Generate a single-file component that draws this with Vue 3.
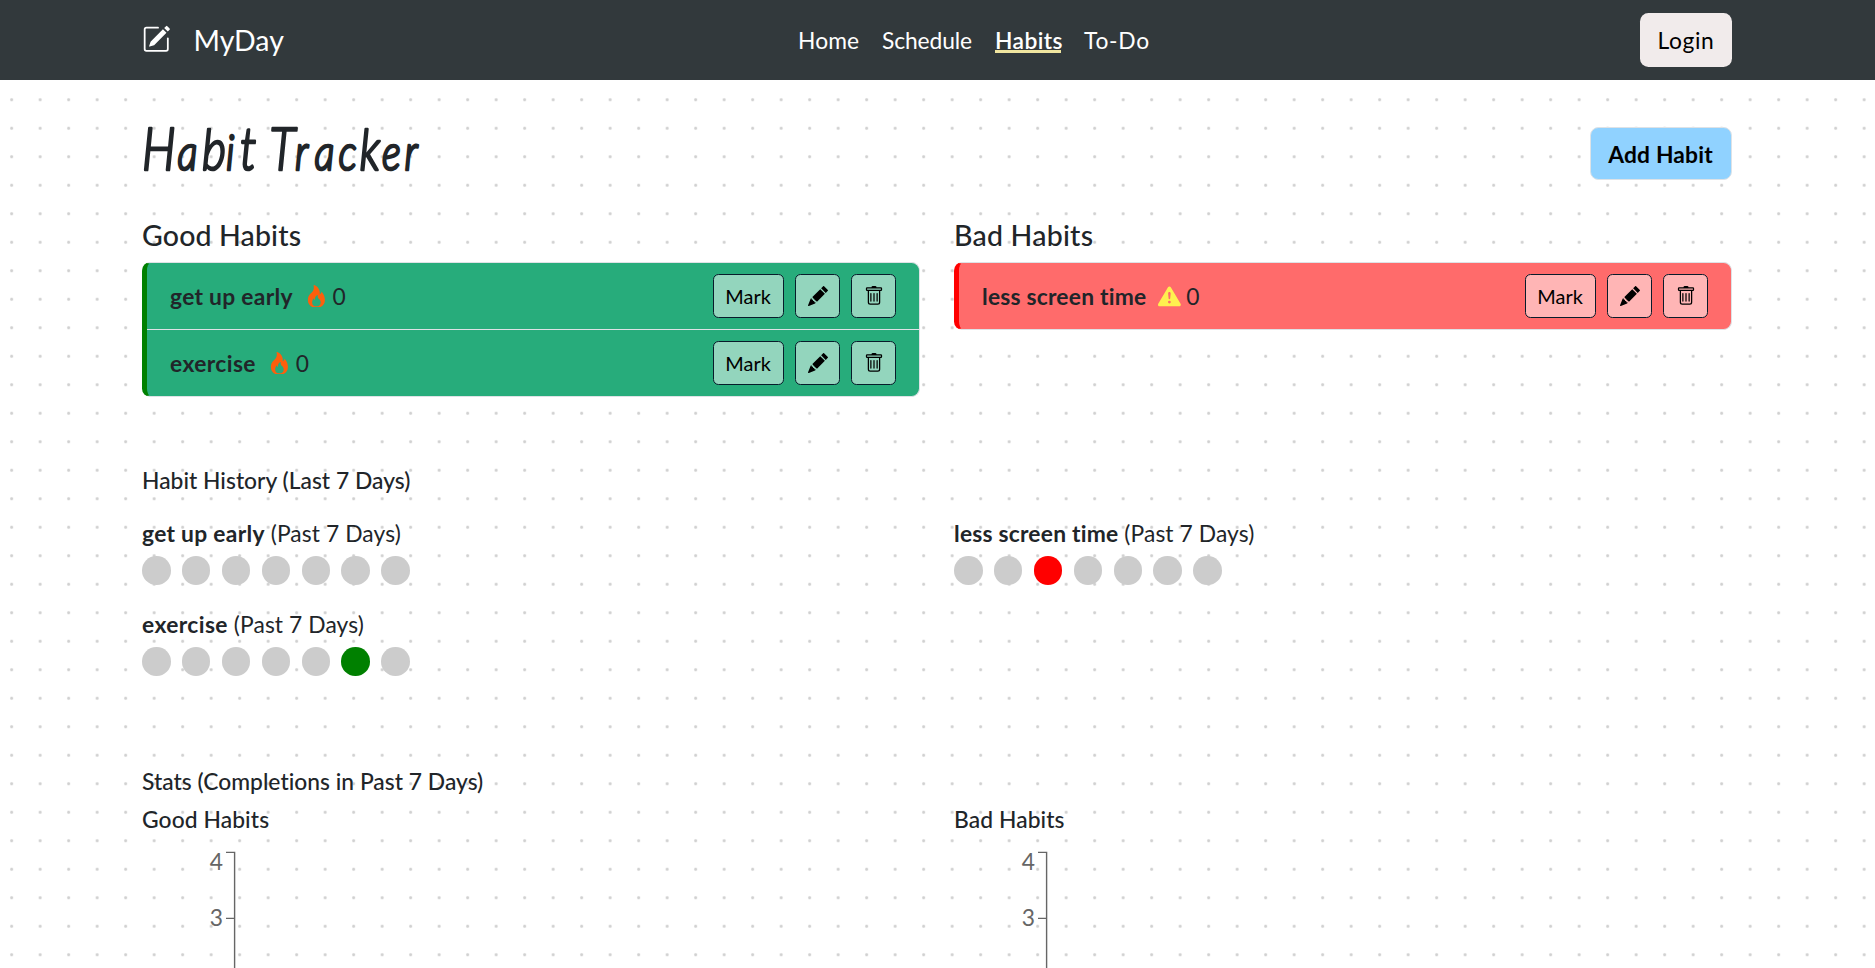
<script setup>
const links = [
  { label: 'Home', tracking: 0.09 },
  { label: 'Schedule', tracking: -0.1 },
  { label: 'Habits', tracking: 0.4, active: true },
  { label: 'To-Do', tracking: 0.75 },
]

// Hand-lettered title: each run has its own start and letter size.
const titleRuns = [
  { text: 'H', x: 0, size: 60 },
  { text: 'a', x: 35.5, size: 50 },
  { text: 'b', x: 60, size: 58 },
  { text: 'i', x: 84, size: 50 },
  { text: 't', x: 98, size: 60 },
  { text: ' ', x: 114, size: 50 },
  { text: 'T', x: 127.5, size: 60 },
  { text: 'r', x: 153, size: 50 },
  { text: 'a', x: 172.5, size: 50 },
  { text: 'c', x: 196.5, size: 50 },
  { text: 'k', x: 217.5, size: 58 },
  { text: 'e', x: 240, size: 50 },
  { text: 'r', x: 262.5, size: 50 },
]
const squeeze = 0.8

const habits = {
  good: [
    { name: 'get up early', streak: 0, tracking: 0.3, history: [0, 0, 0, 0, 0, 0, 0] },
    { name: 'exercise', streak: 0, tracking: 0.4, history: [0, 0, 0, 0, 0, 1, 0] },
  ],
  bad: [
    { name: 'less screen time', streak: 0, tracking: 0.22, history: [0, 0, 1, 0, 0, 0, 0] },
  ],
}
const groups = [
  { kind: 'good', title: 'Good Habits', tracking: 0.15 },
  { kind: 'bad', title: 'Bad Habits', tracking: 0.22 },
]
</script>

<template>
  <div class="page">
    <header class="navbar">
      <div class="brand">
        <svg class="brand-icon" viewBox="0 0 16 16" fill="currentColor">
          <path d="M15.502 1.94a.5.5 0 0 1 0 .706L14.459 3.69l-2-2L13.502.646a.5.5 0 0 1 .707 0l1.293 1.293zm-1.75 2.456-2-2L4.939 9.21a.5.5 0 0 0-.121.196l-.805 2.414a.25.25 0 0 0 .316.316l2.414-.805a.5.5 0 0 0 .196-.12l6.813-6.814z" />
          <path fill-rule="evenodd" d="M1 13.5A1.5 1.5 0 0 0 2.5 15h11a1.5 1.5 0 0 0 1.5-1.5v-6a.5.5 0 0 0-1 0v6a.5.5 0 0 1-.5.5h-11a.5.5 0 0 1-.5-.5v-11a.5.5 0 0 1 .5-.5H9a.5.5 0 0 0 0-1H2.5A1.5 1.5 0 0 0 1 2.5z" />
        </svg>
        <span class="brand-name">MyDay</span>
      </div>
      <nav class="links">
        <div v-for="l in links" :key="l.label">
          <a class="link" :class="{ active: l.active }" :style="{ letterSpacing: l.tracking + 'px' }">{{ l.label }}</a>
        </div>
      </nav>
      <button class="login">Login</button>
    </header>

    <main class="content">
      <div class="title-row">
        <h1>
          <svg class="title" width="300" height="70" viewBox="0 0 300 70">
            <text :transform="`scale(${squeeze} 1)`" y="54"><tspan v-for="(r, n) in titleRuns" :key="n" :x="r.x / squeeze" :font-size="r.size">{{ r.text }}</tspan></text>
          </svg>
        </h1>
        <button class="add">Add Habit</button>
      </div>

      <div class="columns lists">
        <section v-for="g in groups" :key="g.kind">
          <h2 class="group-title" :style="{ letterSpacing: g.tracking + 'px' }">{{ g.title }}</h2>
          <ul class="list" :class="g.kind">
            <li v-for="h in habits[g.kind]" :key="h.name" class="item">
              <strong class="name" :style="{ letterSpacing: h.tracking + 'px' }">{{ h.name }}</strong>
              <svg v-if="g.kind === 'good'" class="status fire" viewBox="0 0 16 16" fill="currentColor">
                <path d="M8 16c3.314 0 6-2 6-5.5 0-1.5-.5-4-2.5-6 .25 1.5-1.25 2-1.25 2C11 4 9 .5 6 0c.357 2 .5 4-2 6-1.25 1-2 2.729-2 4.5C2 14 4.686 16 8 16m0-1c-1.657 0-3-1-3-2.75 0-.75.25-2 1.25-3C6.125 10 7 10.5 7 10.5c-.375-1.25.5-3.25 2-3.5-.179 1-.25 2 1 3 .625.5 1 1.364 1 2.25C11 14 9.657 15 8 15" />
              </svg>
              <svg v-else class="status warn" viewBox="0 0 16 16" fill="currentColor">
                <path d="M8.982 1.566a1.13 1.13 0 0 0-1.96 0L.165 13.233c-.457.778.091 1.767.98 1.767h13.713c.889 0 1.438-.99.98-1.767zM8 5c.535 0 .954.462.9.995l-.35 3.507a.552.552 0 0 1-1.1 0L7.1 5.995A.905.905 0 0 1 8 5m.002 6a1 1 0 1 1 0 2 1 1 0 0 1 0-2" />
              </svg>
              <span class="streak">{{ h.streak }}</span>
              <div class="actions">
                <button class="btn mark">Mark</button>
                <button class="btn icon">
                  <svg viewBox="0 0 16 16" fill="currentColor">
                    <path d="M12.854.146a.5.5 0 0 0-.707 0L10.5 1.793 14.207 5.5l1.647-1.646a.5.5 0 0 0 0-.708zm.646 6.061L9.793 2.5 3.293 9H3.5a.5.5 0 0 1 .5.5v.5h.5a.5.5 0 0 1 .5.5v.5h.5a.5.5 0 0 1 .5.5v.5h.5a.5.5 0 0 1 .5.5v.207zm-7.468 7.468A.5.5 0 0 1 6 13.5V13h-.5a.5.5 0 0 1-.5-.5V12h-.5a.5.5 0 0 1-.5-.5V11h-.5a.5.5 0 0 1-.5-.5V10h-.5a.5.5 0 0 1-.175-.032l-.179.178a.5.5 0 0 0-.11.168l-2 5a.5.5 0 0 0 .65.65l5-2a.5.5 0 0 0 .168-.11z" />
                  </svg>
                </button>
                <button class="btn icon">
                  <svg viewBox="0 0 16 16" fill="currentColor">
                    <path d="M5.5 5.5A.5.5 0 0 1 6 6v6a.5.5 0 0 1-1 0V6a.5.5 0 0 1 .5-.5m2.5 0a.5.5 0 0 1 .5.5v6a.5.5 0 0 1-1 0V6a.5.5 0 0 1 .5-.5m3 .5a.5.5 0 0 0-1 0v6a.5.5 0 0 0 1 0z" />
                    <path d="M14.5 3a1 1 0 0 1-1 1H13v9a2 2 0 0 1-2 2H5a2 2 0 0 1-2-2V4h-.5a1 1 0 0 1-1-1V2a1 1 0 0 1 1-1H6a1 1 0 0 1 1-1h2a1 1 0 0 1 1 1h3.5a1 1 0 0 1 1 1zM4.118 4 4 4.059V13a1 1 0 0 0 1 1h6a1 1 0 0 0 1-1V4.059L11.882 4zM2.5 3h11V2h-11z" />
                  </svg>
                </button>
              </div>
            </li>
          </ul>
        </section>
      </div>

      <h3 class="heading">Habit History (Last 7 Days)</h3>
      <div class="columns history">
        <section v-for="g in groups" :key="g.kind">
          <div v-for="h in habits[g.kind]" :key="h.name" class="record">
            <p class="caption"><strong :style="{ letterSpacing: h.tracking + 'px' }">{{ h.name }}</strong> (Past 7 Days)</p>
            <div class="days">
              <i v-for="(d, n) in h.history" :key="n" class="day" :class="d ? g.kind : ''"></i>
            </div>
          </div>
        </section>
      </div>

      <h3 class="heading">Stats (Completions in Past 7 Days)</h3>
      <div class="columns stats">
        <section v-for="g in groups" :key="g.kind">
          <h3 class="heading">{{ g.title }}</h3>
          <svg class="chart" width="400" height="118" viewBox="0 0 400 118">
            <path class="axis" d="M84 1.4H92.6V118M84 67.4H92.6" />
            <text x="81" y="19">4</text>
            <text x="81" y="75">3</text>
          </svg>
        </section>
      </div>
    </main>
  </div>
</template>

<style>
body {
  overflow: hidden;
}
</style>

<style scoped>
* {
  box-sizing: border-box;
  margin: 0;
  padding: 0;
}
.page {
  height: 968px;
  overflow: hidden;
  font: 400 22.8px/28px Lato, "Open Sans", sans-serif;
  font-variant-ligatures: none;
  color: #212529;
  background: #fff radial-gradient(circle, #d0d0d0 1px, transparent 2px) -2.6px 0 / 28.5px 28.5px;
}
button {
  font: inherit;
  color: #000;
  display: flex;
  align-items: center;
  justify-content: center;
}
.navbar {
  height: 80px;
  padding: 0 143px 0 142px;
  display: flex;
  align-items: center;
  background: #32393c;
  color: #fff;
}
.brand {
  width: 656px;
  display: flex;
  align-items: center;
}
.brand-icon {
  width: 28.5px;
  height: 28.5px;
  margin-top: -1px;
}
.brand-name {
  margin-left: 23px;
  font-size: 28.5px;
  line-height: 34px;
  margin-top: -1px;
}
.links {
  display: grid;
  grid-template-columns: 84px 113px 89px 80px;
  margin-top: -1px;
}
.link {
  position: relative;
  display: inline-block;
}
.link.active {
  width: 66px;
  font-weight: 600;
}
.link.active::after {
  content: "";
  position: absolute;
  left: 0;
  right: 0;
  top: 24px;
  height: 3px;
  background: #f0e6a0;
}
.login {
  width: 92px;
  height: 54px;
  margin-left: auto;
  padding-bottom: 1px;
  border: 0;
  border-radius: 8.5px;
  background: #f1ebeb;
  letter-spacing: 0.6px;
}
.content {
  padding: 36px 143.5px 0 142px;
}
.title-row {
  height: 102px;
  display: flex;
  justify-content: space-between;
  align-items: flex-start;
}
.title {
  display: block;
  overflow: visible;
  font-family: Lato, sans-serif;
  font-style: italic;
  font-weight: 300;
  fill: currentColor;
  stroke: currentColor;
  stroke-width: 2.7px;
  stroke-linejoin: round;
}
.add {
  width: 142px;
  height: 53px;
  margin-top: 11px;
  border: 1px solid #dee2e6;
  border-radius: 8.5px;
  background: #90d2ff;
  font-weight: 700;
  letter-spacing: 0.18px;
}
.columns {
  display: grid;
  grid-template-columns: 1fr 1fr;
  column-gap: 34.5px;
}
.lists {
  height: 248px;
}
.group-title {
  height: 44px;
  font-size: 28.5px;
  line-height: 34px;
  font-weight: 500;
}
.list {
  list-style: none;
  border: 1px solid #dee2e6;
  border-left: 5px solid green;
  border-radius: 8.5px;
  overflow: hidden;
}
.list.good {
  background: #27ac7b;
}
.list.bad {
  border-left-color: red;
  background: #ff6b6b;
}
.item {
  height: 66px;
  padding: 0 23px;
  display: flex;
  align-items: center;
}
.item + .item {
  height: 67px;
  border-top: 1px solid #dee2e6;
}
.name {
  margin-top: -1px;
}
.status {
  width: 22.8px;
  height: 22.8px;
  margin-left: 12px;
}
.fire {
  color: #fd5f0c;
}
.warn {
  color: #fff04f;
}
.streak {
  margin: -1px 0 0 5px;
}
.actions {
  margin-left: auto;
  display: flex;
  gap: 11.4px;
}
.btn {
  height: 44px;
  border: 1px solid #081c2b;
  border-radius: 5.5px;
  font-size: 19.95px;
}
.good .btn {
  background: #93d5bd;
}
.bad .btn {
  background: #ffb5b5;
}
.mark {
  width: 71px;
  padding-bottom: 1px;
}
.icon {
  width: 44.6px;
  padding-left: 1px;
}
.icon svg {
  width: 20px;
  height: 20px;
}
.heading {
  font-size: 22.8px;
  line-height: 28px;
  font-weight: 500;
  letter-spacing: 0.03px;
}
.history {
  height: 273px;
  padding-top: 25px;
}
.record {
  height: 91px;
}
.caption {
  height: 37px;
  letter-spacing: 0.1px;
}
.days {
  display: flex;
  gap: 11.4px;
}
.day {
  width: 28.5px;
  height: 28.5px;
  border-radius: 50%;
  background: #ccc;
}
.day.good {
  background: green;
}
.day.bad {
  background: red;
}
.stats {
  padding-top: 10px;
}
.stats .heading {
  letter-spacing: 0.1px;
}
.chart {
  display: block;
  margin-top: 18px;
}
.chart text {
  fill: #666;
  text-anchor: end;
}
.axis {
  fill: none;
  stroke: #666;
  stroke-width: 1.4;
}
</style>
